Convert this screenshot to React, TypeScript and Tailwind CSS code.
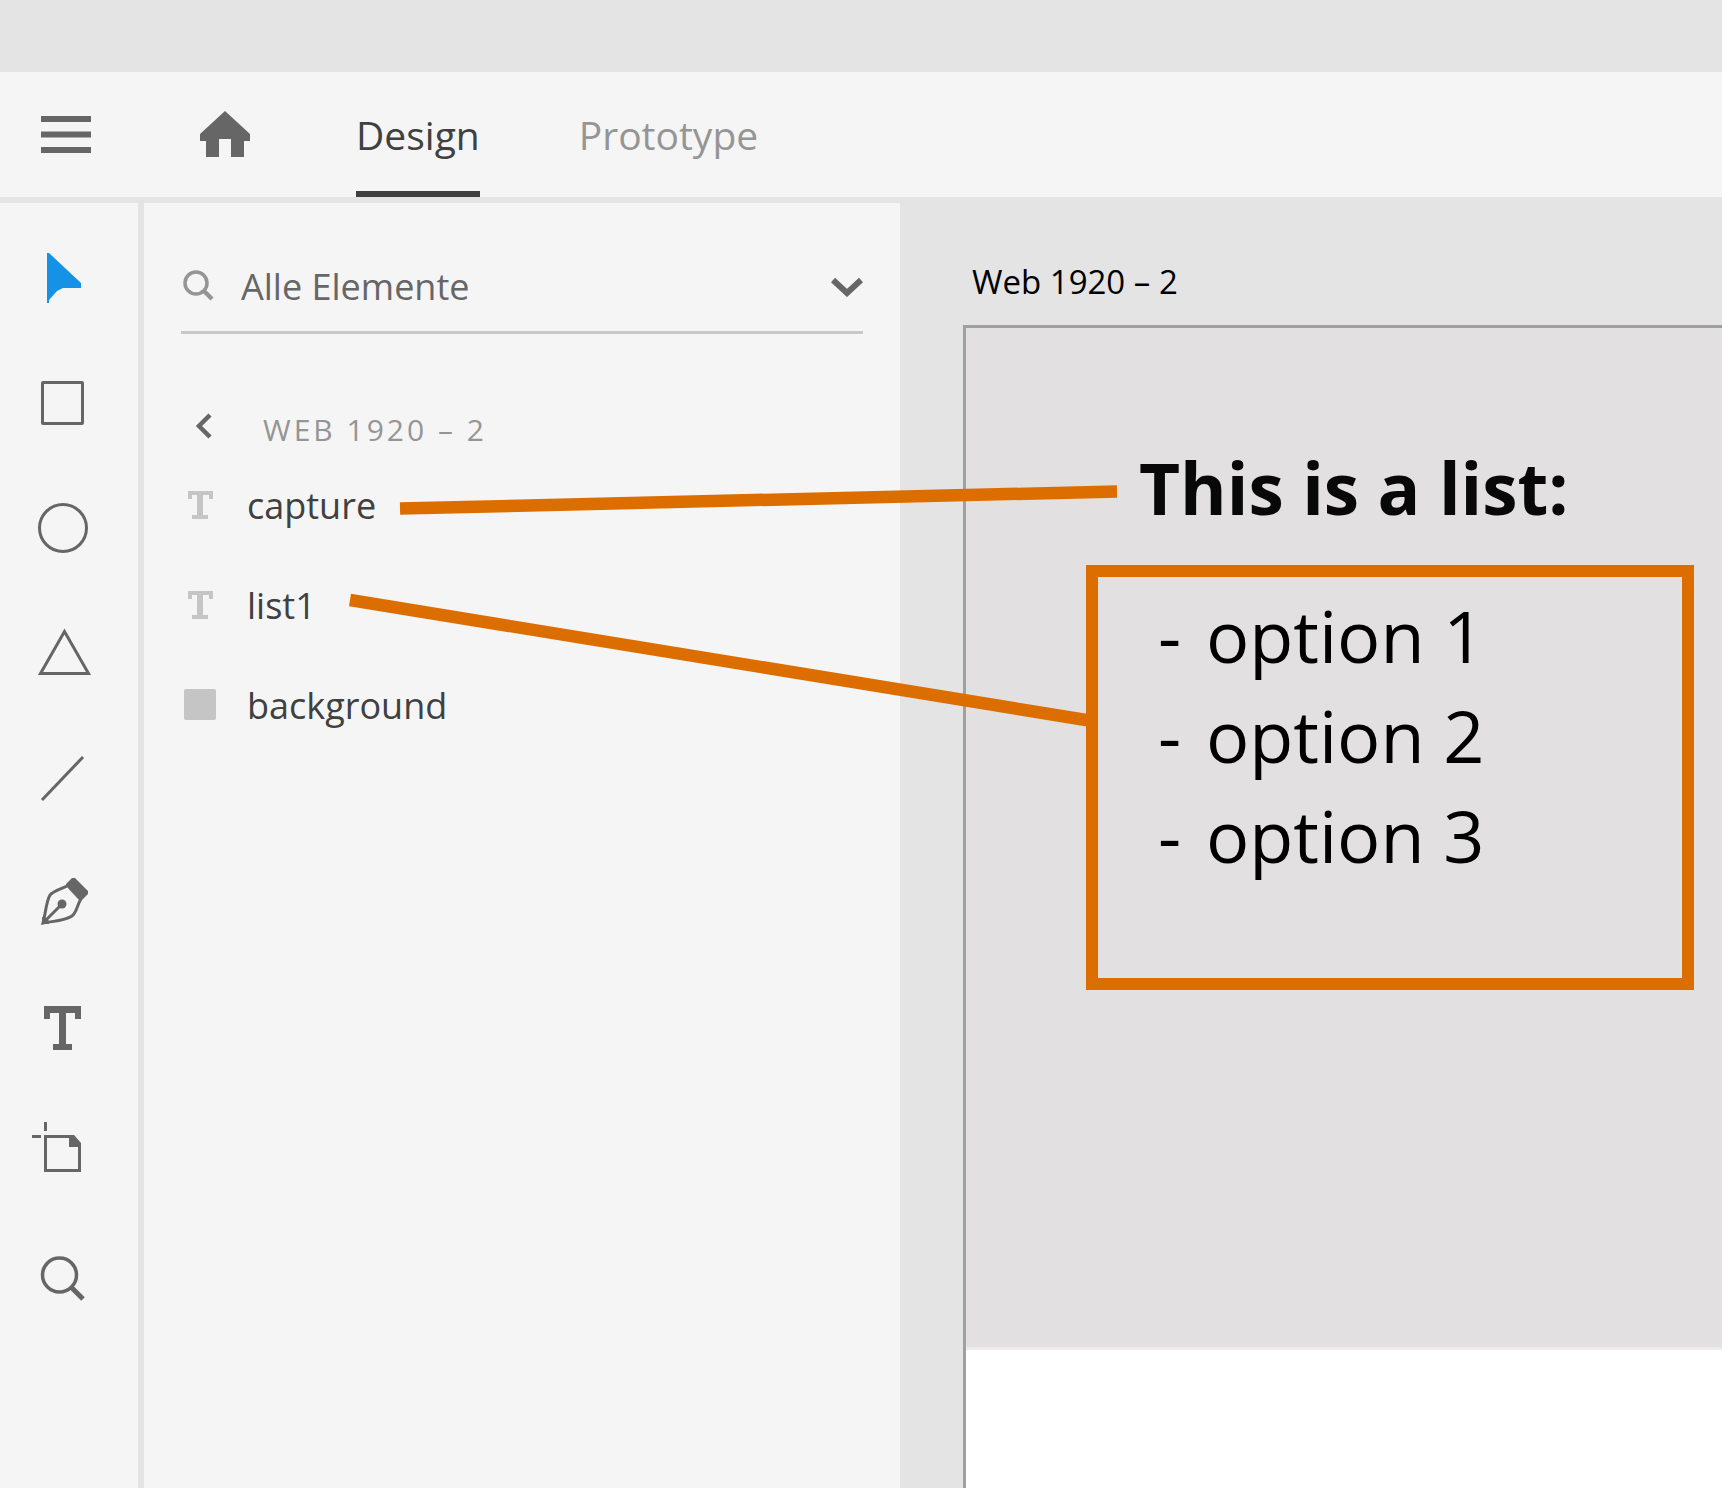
import type { ReactNode } from "react";

const tools: { name: string; icon: ReactNode; active?: boolean }[] = [
  {
    name: "Select",
    active: true,
    icon: <path d="M17 7h2L51 37v5H33l-6 3-8 9v3h-2z" fill="currentColor" />,
  },
  {
    name: "Rectangle",
    icon: <rect x="12.5" y="11.5" width="40" height="41" rx="0.5" strokeWidth="3" />,
  },
  { name: "Ellipse", icon: <circle cx="33" cy="32" r="23.5" strokeWidth="3" /> },
  {
    name: "Polygon",
    icon: <path d="M34.5 10.5 10.5 52.5h48z" strokeWidth="3" />,
  },
  { name: "Line", icon: <path d="M12 54 53 11" strokeWidth="3" /> },
  {
    name: "Pen",
    icon: (
      <>
        <path
          d="M37 15C31 18 23 20 20 24 16 31 16 41 13 52c10-2 22-2 29-7 5-4 5-11 9-17"
          strokeWidth="3"
        />
        <path d="M13 52 32 33" strokeWidth="3" />
        <circle cx="32" cy="33" r="4.5" fill="currentColor" />
        <path d="M42 7h3l13 13v3l-6 6h-3L36 15v-2z" fill="currentColor" />
        <path d="M12 46h3l4 4v3h-7z" fill="currentColor" />
      </>
    ),
  },
  {
    name: "Text",
    icon: (
      <path
        d="M14 10h37v13h-6v-6h-9v31h6v6H23v-6h6V17h-9v6h-6z"
        fill="currentColor"
      />
    ),
  },
  {
    name: "Artboard",
    icon: (
      <>
        <path d="M15.5 1v9M2 15.5h9" strokeWidth="3" />
        <path d="M15.5 15.5H43l6.500 8v26h-34z" strokeWidth="3" />
        <path d="M39 14h5l7 8v4H39z" fill="currentColor" />
      </>
    ),
  },
  {
    name: "Zoom",
    icon: (
      <>
        <circle cx="29.5" cy="29" r="17" strokeWidth="3.5" />
        <path d="M41 41 53 53" strokeWidth="5" />
      </>
    ),
  },
];

function TextLayerIcon() {
  return (
    <svg viewBox="0 0 32 32" className="h-8 w-8 shrink-0 fill-[#c5c5c5]" aria-hidden="true">
      <path d="M4 2h25v8h-4V6h-6v20h5v4H8v-4h5V6H8v4H4z" />
    </svg>
  );
}

function ShapeLayerIcon() {
  return (
    <svg viewBox="0 0 32 32" className="h-8 w-8 shrink-0 fill-[#c5c5c5]" aria-hidden="true">
      <rect width="32" height="31" rx="2" />
    </svg>
  );
}

const layers = [
  { name: "capture", icon: <TextLayerIcon /> },
  { name: "list1", icon: <TextLayerIcon /> },
  { name: "background", icon: <ShapeLayerIcon /> },
];

const options = ["option 1", "option 2", "option 3"];

function Header() {
  return (
    <header className="flex h-[125px] shrink-0 bg-[#f5f5f5]">
      <button type="button" aria-label="Menu" className="ml-[41px] text-[#666]">
        <svg width="50" height="38" viewBox="0 0 50 38" fill="currentColor" aria-hidden="true">
          <path d="M0 0h50v6H0zM0 15.5h50v6H0zM0 31h50v6H0z" />
        </svg>
      </button>
      <button type="button" aria-label="Home" className="ml-[109px] pb-0.5 text-[#666]">
        <svg width="50" height="47" viewBox="0 0 50 47" fill="currentColor" aria-hidden="true">
          <path d="M25 1 50 24v7h-6v16H31V29H19v18H6V31H0v-7z" />
        </svg>
      </button>
      <nav className="ml-[106px] flex gap-[99px] text-[39px]">
        <button type="button" className="border-b-6 border-[#404040] pt-2 text-[#404040]">
          Design
        </button>
        <button type="button" className="border-b-6 border-transparent pt-2 text-[#959595]">
          Prototype
        </button>
      </nav>
    </header>
  );
}

function Toolbar() {
  return (
    <div role="toolbar" aria-label="Tools" className="flex w-[138px] shrink-0 flex-col bg-[#f5f5f5] pt-[13px]">
      {tools.map((tool) => (
        <button
          key={tool.name}
          type="button"
          aria-label={tool.name}
          className={
            tool.active
              ? "flex h-[125px] items-center pl-[30px] text-[#1592e6]"
              : "flex h-[125px] items-center pl-[30px] text-[#666]"
          }
        >
          <svg width="64" height="65" viewBox="0 0 64 65" fill="none" aria-hidden="true">
            <g stroke="currentColor" strokeWidth="0">
              {tool.icon}
            </g>
          </svg>
        </button>
      ))}
    </div>
  );
}

function LayersPanel() {
  return (
    <aside className="flex w-[756px] shrink-0 flex-col bg-[#f5f5f5] px-[37px] pt-10">
      <div className="flex h-[91px] items-center border-b-3 border-[#c8c8c8]">
        <label htmlFor="filter" className="text-[#959595]">
          <svg width="34" height="34" viewBox="0 0 34 34" fill="none" stroke="currentColor" role="img" aria-label="Filter">
            <circle cx="15" cy="13" r="11" strokeWidth="3.5" />
            <path d="m23 21 8 8" strokeWidth="4.5" />
          </svg>
        </label>
        <input
          id="filter"
          type="text"
          defaultValue="Alle Elemente"
          className="ml-[26px] min-w-0 flex-1 bg-transparent text-[36px] leading-[48px] text-[#666] outline-none"
        />
        <button type="button" aria-label="Show filters" className="text-[#666]">
          <svg width="32" height="19" viewBox="0 0 32 19" fill="none" stroke="currentColor" aria-hidden="true">
            <path d="m2 2 14 13L30 2" strokeWidth="6" />
          </svg>
        </button>
      </div>
      <button type="button" className="mt-[70px] flex h-[51px] items-center pl-[14px] text-[30px] text-[#959595]">
        <svg width="18" height="28" viewBox="0 0 18 28" fill="none" className="mb-2 text-[#666]" aria-hidden="true">
          <path d="M15 3 4 14l11 11" stroke="currentColor" strokeWidth="4.5" />
        </svg>
        <span className="ml-[50px] tracking-widest">WEB 1920 – 2</span>
      </button>
      <ul className="text-[36px] text-[#404040]">
        {layers.map((layer) => (
          <li key={layer.name}>
            <button type="button" className="flex h-[100px] w-full items-start gap-[31px] pl-[3px] leading-[102px]">
              <span className="pt-[34px]">{layer.icon}</span>
              {layer.name}
            </button>
          </li>
        ))}
      </ul>
    </aside>
  );
}

function Canvas() {
  return (
    <main className="flex min-w-0 flex-1 flex-col pl-[63px] text-black">
      <p className="flex h-[122px] items-center pt-9 pl-[9px] text-[33px]">Web 1920 – 2</p>
      <section className="flex flex-1 flex-col border-t-3 border-l-3 border-[#a0a0a0] bg-white">
        <div className="border-b-3 border-[#ececec] bg-[#e2e0e1] pt-[112px] pb-[357px]">
          <h1 className="ml-[173px] text-[71px] leading-[96px] font-bold whitespace-nowrap text-[#080808]">
            This is a list:
          </h1>
          <ul className="mt-[29px] mr-7 ml-[120px] border-12 border-[#dc6e00] pt-2 pb-[93px] pl-[60px] text-[72px] leading-[100px] whitespace-nowrap">
            {options.map((option) => (
              <li key={option}>
                <span className="mr-1.5">-</span> {option}
              </li>
            ))}
          </ul>
        </div>
      </section>
    </main>
  );
}

function Connectors() {
  return (
    <svg
      width="1120"
      height="740"
      viewBox="0 0 1120 740"
      className="pointer-events-none absolute top-0 left-0"
      fill="none"
      stroke="#dc6e00"
      strokeWidth="12.5"
      aria-hidden="true"
    >
      <path d="M400 508.5 1117 491.5" />
      <path d="M350 600 1089 720.5" />
    </svg>
  );
}

export default function App() {
  return (
    <div className="relative flex min-h-screen flex-col overflow-hidden bg-[#e4e4e4] pt-[72px] font-['Open_Sans',sans-serif]">
      <Header />
      <div className="mt-1.5 flex flex-1">
        <Toolbar />
        <div className="ml-1.5 flex min-w-0 flex-1">
          <LayersPanel />
          <Canvas />
        </div>
      </div>
      <Connectors />
    </div>
  );
}
